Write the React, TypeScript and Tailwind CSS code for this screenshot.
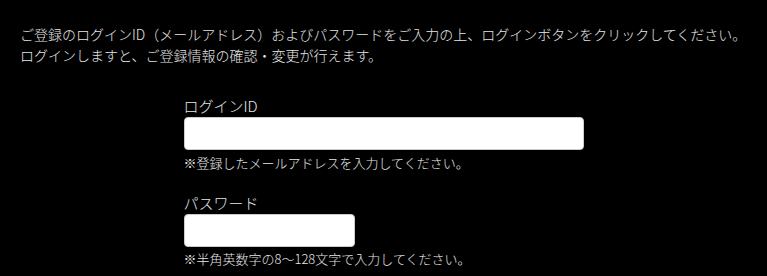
export default function App() {
  return (
    <div className="min-h-screen bg-black text-[#e6e6e6] font-['Noto_Sans_CJK_JP','Noto_Sans',sans-serif] font-light pt-6 px-5">
      <p className="text-[14px] leading-[21px]">
        ご登録のログインID（メールアドレス）およびパスワードをご入力の上、ログインボタンをクリックしてください。
        <br />
        ログインしますと、ご登録情報の確認・変更が行えます。
      </p>

      <form className="mx-auto w-[400px] mt-[29px]">
        <div>
          <label className="block text-[15px] leading-[22px]">ログインID</label>
          <input
            type="email"
            className="block w-[400px] h-[33px] rounded-[4px] bg-white border border-[#ccc] px-2 text-black"
          />
          <p className="text-[13px] leading-[19px] mt-[3px]">※登録したメールアドレスを入力してください。</p>
        </div>

        <div className="mt-[20px]">
          <label className="block text-[15px] leading-[22px]">パスワード</label>
          <input
            type="password"
            className="block w-[171px] h-[33px] rounded-[4px] bg-white border border-[#ccc] px-2 text-black"
          />
          <p className="text-[13px] leading-[19px] mt-[2px]">※半角英数字の8〜128文字で入力してください。</p>
        </div>
      </form>
    </div>
  );
}
